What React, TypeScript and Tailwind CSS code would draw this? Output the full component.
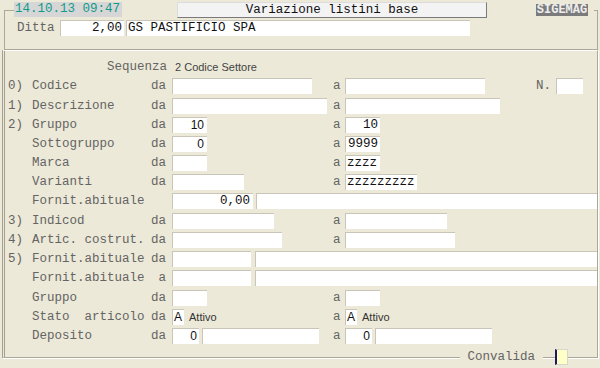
import React from 'react';

const mono = "font-['Liberation_Mono',monospace]";
const sans = "font-['Liberation_Sans',Arial,sans-serif]";
const lbl = `${mono} text-[12.5px] leading-[16px] text-[#646464] whitespace-pre shrink-0`;

interface FieldProps {
  className?: string;
  right?: boolean;
  font?: 'mono' | 'sans';
  children?: React.ReactNode;
}

// campo di input "sunken" bianco
function Field({ className = '', right = false, font = 'mono', children }: FieldProps) {
  const f = font === 'sans' ? `${sans} text-[12px]` : `${mono} text-[12.5px]`;
  return (
    <div
      className={`h-[16px] shrink-0 overflow-hidden whitespace-pre bg-white border-t border-l border-[#c9c6b9] leading-[15px] text-[#111] ${f} ${
        right ? 'text-right pr-[2px]' : 'pl-[1px]'
      } ${className}`}
    >
      {children}
    </div>
  );
}

interface RowProps {
  h: string;
  num?: string;
  label: string;
  da?: string;
  left?: React.ReactNode;
  right?: React.ReactNode;
  wide?: React.ReactNode;
}

function Row({ h, num = '', label, da = 'da', left, right, wide }: RowProps) {
  return (
    <div className={`flex items-start pl-[3px] ${h}`}>
      <span className={`${lbl} w-[24px]`}>{num}</span>
      <span className={`${lbl} w-[119px]`}>{label}</span>
      <span className={`${lbl} w-[15px] text-right`}>{da}</span>
      <div className="w-[6px] shrink-0" />
      {wide ? (
        <div className="flex flex-1">{wide}</div>
      ) : (
        <>
          <div className="w-[161px] shrink-0 flex items-start">{left}</div>
          <span className={`${lbl} w-[12px]`}>a</span>
          <div className="flex flex-1 items-start">{right}</div>
        </>
      )}
    </div>
  );
}

function Stato() {
  return (
    <>
      <Field font="sans" className="w-[12px]">A</Field>
      <span className={`${sans} text-[11px] leading-[16px] text-[#333] ml-[5px]`}>Attivo</span>
    </>
  );
}

function Deposito({ w }: { w: string }) {
  return (
    <>
      <Field font="sans" right className="w-[27px]">0</Field>
      <Field className={`ml-[3px] ${w}`} />
    </>
  );
}

export default function App() {
  return (
    <div className={`w-[600px] h-[368px] bg-[#ece9d8] overflow-hidden ${mono}`}>
      {/* intestazione */}
      <div className="mt-[10px] ml-[4px] w-[594px] h-[40px] border border-[#aca899]">
        <div className="-mt-[10px] ml-[9px] mr-[3px] h-[19px] bg-[#ece9d8] flex items-start">
          <div className="w-[108px] h-[15px] mt-[1px] bg-[#d6d6d6] text-[#129a8a] text-[12.5px] leading-[15px] pl-[1px] whitespace-pre">
            14.10.13 09:47
          </div>
          <div className="ml-[55px] w-[310px] h-[16px] mt-[1px] bg-[#f3f3f3] border border-[#dcdcdc] border-r-[#7a7a7a] border-b-[#7a7a7a] text-center text-[#111] text-[12.5px] leading-[14px]">
            Variazione listini base
          </div>
          <div className="ml-[49px] w-[52px] h-[12px] mt-[3px] bg-[#7b7b7b] text-[#eeeeee] text-[12px] font-bold leading-[12px] text-center">
            SIGEMAG
          </div>
        </div>
        <div className="flex items-start ml-[12px] h-[16px]">
          <span className={`${lbl} w-[43px]`}>Ditta</span>
          <Field right className="w-[64px]">2,00</Field>
          <Field className="ml-[2px] w-[344px]">GS PASTIFICIO SPA</Field>
        </div>
      </div>

      {/* pannello selezione */}
      <div className="ml-[2px] w-[596px] h-[308px] border-double border-l-[3px] border-t border-r border-b border-l-[#a3a093] border-t-white border-r-[#aca899] border-b-[#aca899] shadow-[1px_1px_0_#fff] pt-[9px]">
        <div className="flex items-center h-[14px] pl-[102px]">
          <span className={lbl}>Sequenza</span>
          <span className={`${sans} text-[11px] text-[#444] ml-[8px]`}>2 Codice Settore</span>
        </div>

        <div className="mt-[4px]">
          <Row
            h="h-[20px]"
            num="0)"
            label="Codice"
            left={<Field className="w-[140px]" />}
            right={
              <>
                <Field className="w-[140px]" />
                <span className={`${lbl} ml-[51px]`}>N.</span>
                <Field className="ml-[5px] w-[27px]" />
              </>
            }
          />
          <Row
            h="h-[19px]"
            num="1)"
            label="Descrizione"
            left={<Field className="w-[155px]" />}
            right={<Field className="w-[155px]" />}
          />
          <Row
            h="h-[19px]"
            num="2)"
            label="Gruppo"
            left={<Field font="sans" right className="w-[35px] pr-[3px]">10</Field>}
            right={<Field right className="w-[35px]">10</Field>}
          />
          <Row
            h="h-[19px]"
            label="Sottogruppo"
            left={<Field font="sans" right className="w-[35px] pr-[3px]">0</Field>}
            right={<Field right className="w-[35px]">9999</Field>}
          />
          <Row
            h="h-[19px]"
            label="Marca"
            left={<Field className="w-[35px]" />}
            right={<Field className="w-[35px]">zzzz</Field>}
          />
          <Row
            h="h-[19px]"
            label="Varianti"
            left={<Field className="w-[72px]" />}
            right={<Field className="w-[72px]">zzzzzzzzz</Field>}
          />
          <Row
            h="h-[20px]"
            label="Fornit.abituale"
            da=""
            wide={
              <>
                <Field right className="w-[81px] pr-[3px]">0,00</Field>
                <Field className="ml-[3px] flex-1" />
              </>
            }
          />
          <Row
            h="h-[19px]"
            num="3)"
            label="Indicod"
            left={<Field className="w-[102px]" />}
            right={<Field className="w-[102px]" />}
          />
          <Row
            h="h-[19px]"
            num="4)"
            label="Artic. costrut."
            left={<Field className="w-[110px]" />}
            right={<Field className="w-[110px]" />}
          />
          <Row
            h="h-[19px]"
            num="5)"
            label="Fornit.abituale"
            wide={
              <>
                <Field className="w-[79px]" />
                <Field className="ml-[4px] flex-1" />
              </>
            }
          />
          <Row
            h="h-[20px]"
            label="Fornit.abituale"
            da="a"
            wide={
              <>
                <Field className="w-[79px]" />
                <Field className="ml-[4px] flex-1" />
              </>
            }
          />
          <Row
            h="h-[19px]"
            label="Gruppo"
            left={<Field className="w-[35px]" />}
            right={<Field className="w-[35px]" />}
          />
          <Row h="h-[19px]" label="Stato  articolo" left={<Stato />} right={<Stato />} />
          <Row
            h="h-[19px]"
            label="Deposito"
            left={<Deposito w="w-[117px]" />}
            right={<Deposito w="w-[117px]" />}
          />
        </div>

        {/* didascalia sul bordo inferiore */}
        <div className="mt-[2px] flex justify-end items-center h-[16px] pr-[29px]">
          <span className={`${lbl} bg-[#ece9d8] pl-[7px] pr-[8px]`}>Convalida</span>
          <div className="w-[12px]" />
          <div className="w-[13px] h-[16px] bg-[#ffffc8] border-t border-r border-b border-[#d8d6c8] border-l-2 border-l-[#1c1c5c]" />
        </div>
      </div>
    </div>
  );
}
